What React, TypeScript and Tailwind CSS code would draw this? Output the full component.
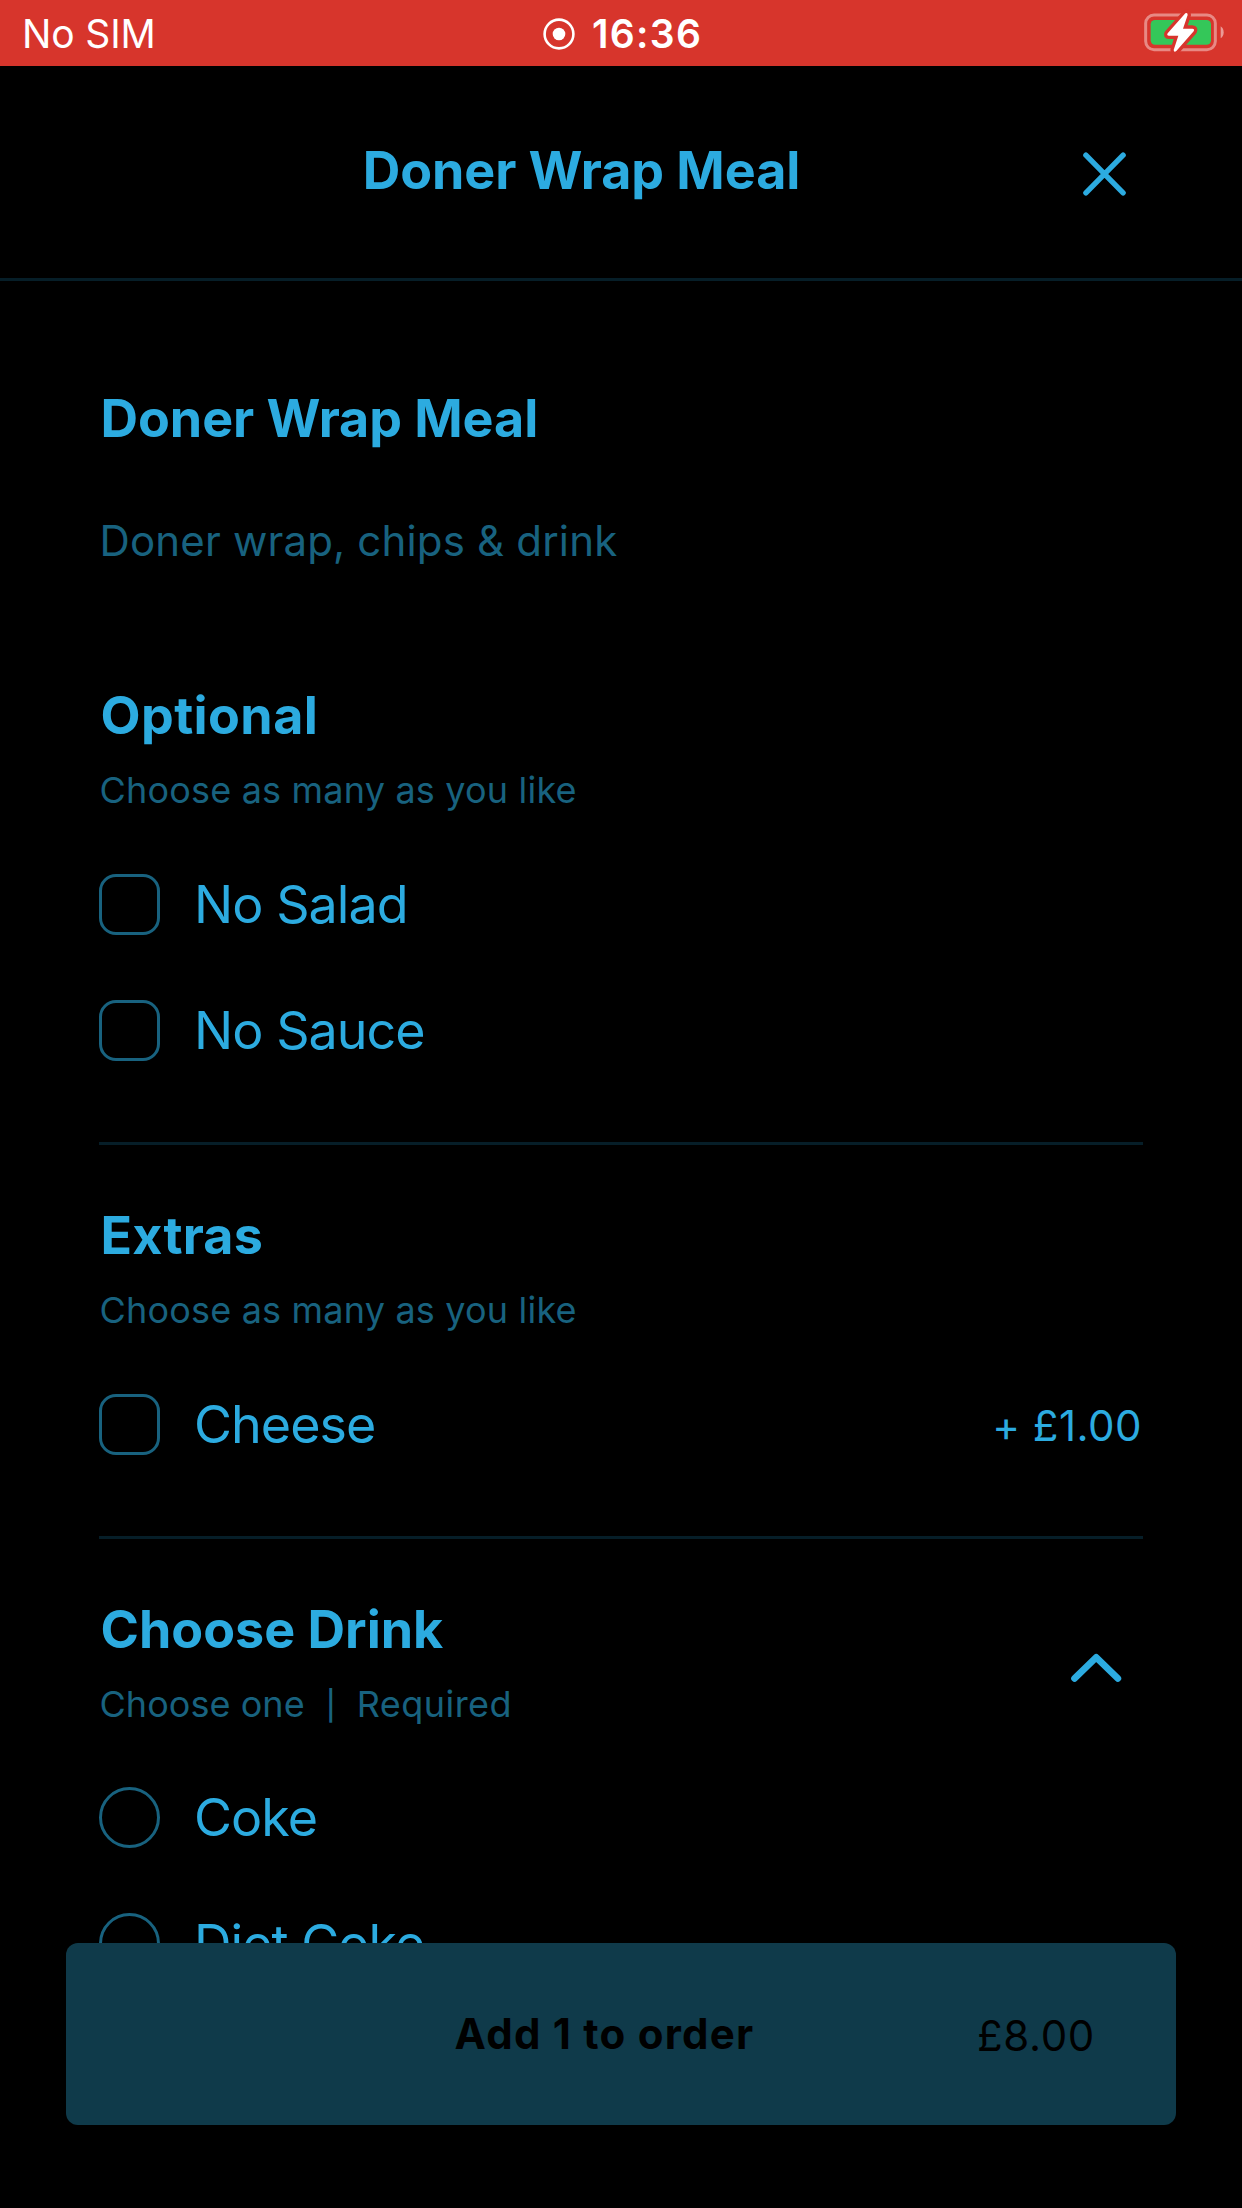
import type { ReactNode } from 'react';

function StatusBar() {
  return (
    <div className="flex h-[66px] items-center bg-[#d7352c] text-[39px] leading-none text-white">
      <span className="w-[543px] pl-[22px] pt-px tracking-[-0.15px]">No SIM</span>
      <svg className="mt-[2px] h-8 w-8" viewBox="0 0 32 32" fill="none">
        <circle cx="16" cy="16" r="14.4" stroke="white" strokeWidth="2.6" />
        <circle cx="16" cy="16" r="6.3" fill="white" />
      </svg>
      <span className="ml-[17px] pt-px font-semibold tracking-[1.3px]">16:36</span>
      <svg className="ml-auto mr-3 h-[66px] w-[90px]" viewBox="0 0 270 198" fill="none">
        <rect x="17" y="45" width="209" height="104" rx="25" stroke="white" strokeOpacity="0.42" strokeWidth="9" />
        <path d="M242 79Q251 85 251 97T242 115Z" fill="white" fillOpacity="0.5" />
        <rect x="32" y="60" width="181" height="74" rx="13" fill="#34c759" />
        <path
          d="M136 40L83 100Q79 107 87 107H115L101 150Q102 159 109 153L161 94Q165 86 157 86H129L143 45Q143 36 136 40Z"
          fill="white"
          stroke="#d7352c"
          strokeWidth="20"
          strokeLinejoin="round"
          paintOrder="stroke"
        />
      </svg>
    </div>
  );
}

function Header() {
  return (
    <header className="flex h-[215px] items-start border-b-[3px] border-[#061e28] pl-[80px] pr-[116px] pt-[73px]">
      <h1 className="flex-1 text-center text-[52px] font-bold leading-[64px] tracking-[-0.05px]">Doner Wrap Meal</h1>
      <svg className="mt-[13px] h-11 w-[43px]" viewBox="0 0 43 44" fill="none" stroke="currentColor" strokeWidth="5.4" strokeLinecap="round">
        <path d="M2.9 3.2L40.1 40.8M40.1 3.2L2.9 40.8" />
      </svg>
    </header>
  );
}

function Group({ title, note, action, children }: { title: ReactNode; note: ReactNode; action?: ReactNode; children: ReactNode }) {
  return (
    <section>
      <div className="flex justify-between">
        <div>
          {title}
          <p className="mt-5 pl-[0.5px] text-[36px] leading-[44px] tracking-[0.19px] text-[#18627f]">{note}</p>
        </div>
        {action}
      </div>
      <div className="mt-[62px] flex flex-col gap-[65px]">{children}</div>
    </section>
  );
}

function Option({ label, price, round }: { label: string; price?: string; round?: boolean }) {
  return (
    <label className="flex h-[61px] items-center">
      <span className={`h-[61px] w-[61px] border-[3px] border-[#18627f] ${round ? 'rounded-full' : 'rounded-[17px]'}`} />
      <span className="ml-[34px] text-[52px] leading-[61px] tracking-[-0.95px]">{label}</span>
      {price && <span className="ml-auto pr-px pt-px text-[42px] leading-[61px] tracking-[0.5px]">{price}</span>}
    </label>
  );
}

const Divider = () => <hr className="mb-[59px] mt-[81px] border-t-[3px] border-[#061e28]" />;

const Chevron = () => (
  <svg className="mr-[21px] mt-[55px] h-[30px] w-[52px]" viewBox="0 0 52 30" fill="none" stroke="currentColor" strokeWidth="6.8" strokeLinecap="round" strokeLinejoin="round">
    <path d="M4.6 25.4L26.2 4.4L47.8 25.4" />
  </svg>
);

export default function App() {
  return (
    <div className="relative h-[2208px] w-[1242px] overflow-hidden bg-black font-['Inter',sans-serif] text-[#2cabe0]">
      <StatusBar />
      <Header />
      <main className="px-[99px] pt-[105px]">
        <h2 className="pl-[1.5px] pt-px text-[52px] font-bold leading-[64px] tracking-[-0.05px]">Doner Wrap Meal</h2>
        <p className="mb-[119px] mt-[66px] pl-[0.5px] text-[42px] leading-[48px] tracking-[0.17px] text-[#18627f]">Doner wrap, chips &amp; drink</p>
        <Group
          title={<h3 className="pl-[1.5px] text-[52px] font-bold leading-[64px] tracking-[0.4px]">Optional</h3>}
          note="Choose as many as you like"
        >
          <Option label="No Salad" />
          <Option label="No Sauce" />
        </Group>
        <Divider />
        <Group
          title={<h3 className="pl-[1.5px] text-[52px] font-bold leading-[64px] tracking-[0.2px]">Extras</h3>}
          note="Choose as many as you like"
        >
          <Option label="Cheese" price="+ £1.00" />
        </Group>
        <Divider />
        <Group
          title={<h3 className="pl-[1.5px] text-[52px] font-bold leading-[64px] tracking-[0px]">Choose Drink</h3>}
          note={
            <span className="flex h-[43px]">
              <span className="tracking-[0.05px]">Choose one</span>
              <span className="ml-[21px] w-[10px] pt-[2px] text-center text-[29px] font-medium">|</span>
              <span className="ml-[21px] tracking-[0.45px]">Required</span>
            </span>
          }
          action={<Chevron />}
        >
          <Option round label="Coke" />
          <Option round label="Diet Coke" />
        </Group>
      </main>
      <button className="absolute bottom-[83px] left-[66px] flex h-[182px] w-[1110px] items-center rounded-[12px] bg-[#0f3a4a] pl-[166px] pr-[81px] text-[42px] text-black">
        <span className="flex-1 pb-px text-center font-bold tracking-[1.25px]">Add 1 to order</span>
        <span className="pt-[2px] tracking-[0.65px]">£8.00</span>
      </button>
    </div>
  );
}
